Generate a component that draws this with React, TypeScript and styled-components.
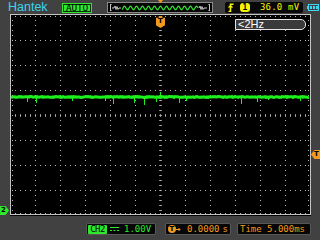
import React, { useMemo } from 'react';
import styled, { createGlobalStyle } from 'styled-components';

const Global = createGlobalStyle`
  html, body { margin: 0; padding: 0; background: #414141; }
  body { width: 320px; height: 240px; overflow: hidden; }
`;

const GREEN = '#2ee82e';
const WAVE = '#1cf01c';
const ORANGE = '#f39a1e';
const YELLOW = '#f4f400';
const CYAN = '#3cd4ee';
const GRID = '#b4b4b4';
const MONO = '"DejaVu Sans Mono", "Liberation Mono", monospace';

const Device = styled.div`
  position: relative;
  width: 320px;
  height: 240px;
  background: #414141;
  display: flex;
  flex-direction: column;
  font-family: ${MONO};
  overflow: hidden;
`;

const TopBar = styled.div`
  position: relative;
  height: 14px;
  display: flex;
  align-items: flex-start;
  padding-left: 8px;
`;

const Brand = styled.div`
  width: 54px;
  font-family: "Liberation Sans", Arial, sans-serif;
  font-size: 12.5px;
  line-height: 14px;
  color: ${CYAN};
`;

const AutoBadge = styled.div`
  width: 30px;
  height: 10px;
  margin-top: 3px;
  margin-right: 15px;
  box-sizing: border-box;
  background: ${GREEN};
  display: flex;
  padding: 1px;
`;

const AutoInner = styled.div`
  flex: 1;
  border: 1px solid #0a300a;
  color: #000;
  font-size: 9.5px;
  line-height: 6px;
  text-align: center;
  letter-spacing: -0.2px;
`;

const Overview = styled.div`
  width: 106px;
  height: 11px;
  margin-top: 2px;
  margin-right: 12px;
  box-sizing: border-box;
  background: #050505;
  border: 1px solid #8a8a8a;
  display: flex;
`;

const TrigInfo = styled.div`
  width: 78px;
  height: 11px;
  margin-top: 2px;
  margin-right: 4px;
  background: #080808;
  border-radius: 2px;
  display: flex;
  align-items: center;
  padding-left: 3px;
  box-sizing: border-box;
  color: ${YELLOW};
  font-size: 9px;
  line-height: 11px;
`;

const SourceBadge = styled.span`
  width: 10px;
  height: 9px;
  margin-left: 6px;
  border-radius: 3px;
  background: ${YELLOW};
  color: #000;
  font-size: 8px;
  line-height: 9px;
  font-weight: bold;
  text-align: center;
`;

const Reading = styled.span<{ $gap: number }>`
  margin-left: ${(p) => p.$gap}px;
  white-space: pre;
  letter-spacing: 0.2px;
`;

const BatteryWrap = styled.div`
  margin-top: 4px;
  display: flex;
`;

const TopTick = styled.div`
  position: absolute;
  left: 158px;
  top: 0;
  width: 5px;
  height: 3px;
  background: ${ORANGE};
  clip-path: polygon(0 0, 100% 0, 50% 100%);
`;

const ScopeRow = styled.div`
  position: relative;
  height: 202px;
  padding-left: 10px;
  display: flex;
`;

const Graticule = styled.div`
  position: relative;
  width: 301px;
  height: 202px;
  background: #000;
`;

const FreqBox = styled.div`
  position: absolute;
  left: 225px;
  top: 5px;
  width: 71px;
  height: 11px;
  box-sizing: border-box;
  border: 1px solid #e4e4e4;
  border-radius: 0 5px 5px 0;
  background: #3a3a3a;
  color: #fff;
  font-family: "Liberation Sans", Arial, sans-serif;
  font-size: 11px;
  line-height: 9px;
  padding-left: 2px;
`;

const Marker = styled.div<{ $color: string; $dir: 'right' | 'left' | 'down' }>`
  position: absolute;
  background: ${(p) => p.$color};
  color: #000;
  font-family: "DejaVu Sans", sans-serif;
  font-weight: bold;
  font-size: 7px;
  text-align: center;
  box-sizing: border-box;
  ${(p) =>
    p.$dir === 'right'
      ? `width: 9px; height: 9px; line-height: 9px; padding-right: 2px;
         clip-path: polygon(0 0, 62% 0, 100% 50%, 62% 100%, 0 100%);`
      : p.$dir === 'left'
      ? `width: 9px; height: 9px; line-height: 9px; padding-left: 2px;
         clip-path: polygon(38% 0, 100% 0, 100% 100%, 38% 100%, 0 50%);`
      : `width: 9px; height: 12px; line-height: 11px;
         clip-path: polygon(30% 0, 70% 0, 70% 15%, 100% 15%, 100% 78%, 50% 100%, 0 78%, 0 15%, 30% 15%);`}
`;

const BottomBar = styled.div`
  height: 24px;
  display: flex;
  align-items: flex-start;
  padding-left: 86px;
  padding-top: 7px;
  box-sizing: border-box;
`;

const InfoBox = styled.div<{ $w: number; $gap: number; $color: string }>`
  width: ${(p) => p.$w}px;
  height: 12px;
  margin-right: ${(p) => p.$gap}px;
  box-sizing: border-box;
  background: #060606;
  border: 1px solid #575757;
  border-radius: 2px;
  display: flex;
  align-items: center;
  padding-left: 1px;
  color: ${(p) => p.$color};
  font-size: 9px;
  line-height: 10px;
  white-space: pre;
`;

const ChBadge = styled.span`
  width: 19px;
  height: 9px;
  background: ${GREEN};
  color: #000;
  font-size: 9px;
  line-height: 9px;
  text-align: center;
  letter-spacing: -0.6px;
  border-radius: 1px;
`;

const Spaced = styled.span<{ $gap: number }>`
  margin-left: ${(p) => p.$gap}px;
  display: inline-flex;
  align-items: center;
`;

const TrigIcon = styled.span`
  width: 8px;
  height: 8px;
  border-radius: 50%;
  background: ${ORANGE};
  color: #000;
  font-family: "DejaVu Sans", sans-serif;
  font-weight: bold;
  font-size: 7px;
  line-height: 8px;
  text-align: center;
  margin-left: 1px;
`;

function useGridPath() {
  return useMemo(() => {
    const d: string[] = [];
    const dot = (x: number, y: number, w = 1, h = 1) => d.push(`M${x} ${y}h${w}v${h}h${-w}z`);
    for (let k = 1; k < 12; k++) {
      const x = k * 25;
      for (let y = 6; y < 201; y += 5) dot(x, y);
    }
    for (let k = 1; k < 8; k++) {
      const y = 1 + k * 25;
      for (let x = 5; x < 300; x += 5) dot(x, y);
    }
    // border ticks
    for (let x = 5; x < 300; x += 5) {
      dot(x, 2, 1, 1);
      dot(x, 199, 1, 1);
    }
    for (let y = 6; y < 201; y += 5) {
      dot(2, y, 1, 1);
      dot(298, y, 1, 1);
    }
    return d.join('');
  }, []);
}

function useCenterTicks() {
  return useMemo(() => {
    const d: string[] = [];
    const dot = (x: number, y: number, w = 1, h = 1) => d.push(`M${x} ${y}h${w}v${h}h${-w}z`);
    for (let y = 6; y < 201; y += 5) {
      dot(149, y);
      dot(151, y);
    }
    for (let x = 5; x < 300; x += 5) {
      dot(x, 100);
      dot(x, 102);
    }
    return d.join('');
  }, []);
}

const SPIKES: [number, number][] = [
  [17, 88], [26, 89], [62, 87], [95, 87], [103, 90], [124, 89], [134, 91],
  [146, 88], [150, 78], [169, 89], [176, 87], [231, 90], [247, 88], [258, 86], [290, 87],
];

function useWave() {
  return useMemo(() => {
    let s = 987654;
    const rnd = () => {
      s = (s * 1103515245 + 12345) & 0x7fffffff;
      return s / 0x7fffffff;
    };
    const pts: string[] = [];
    for (let x = 1; x < 300; x += 1) {
      const y = 83 + (rnd() - 0.5) * 0.9;
      pts.push(`${x},${y.toFixed(2)}`);
    }
    return pts.join(' ');
  }, []);
}

function OverviewWave() {
  const sine = useMemo(() => {
    const p: string[] = [];
    for (let x = 14; x <= 90; x += 0.5) p.push(`${x},${(5 + 1.8 * Math.sin((x / 6) * Math.PI * 2)).toFixed(2)}`);
    return p.join(' ');
  }, []);
  return (
    <svg width="104" height="9" viewBox="0 0 104 9">
      <path d="M2 1.5h1.5M2.5 1.5v6M2 7.5h1.5" stroke="#c8c8c8" strokeWidth="1" fill="none" />
      <polyline points="4,5 6,5 7,3 8,6.5 9,3.5 10,6.5 11,5 13,5" stroke="#c8c8c8" fill="none" strokeWidth="1" />
      <polyline points={sine} stroke={GREEN} fill="none" strokeWidth="1.2" />
      <polyline points="91,5 92,3 93,6.5 94,3.5 95,6.5 96,5 99,5" stroke="#c8c8c8" fill="none" strokeWidth="1" />
      <path d="M100.5 1.5h1.5M101.5 1.5v6M100.5 7.5h1.5" stroke="#c8c8c8" strokeWidth="1" fill="none" />
    </svg>
  );
}

function EdgeIcon() {
  return (
    <svg width="6" height="9" viewBox="0 0 6 9">
      <path d="M0.5 8.5H2.5V1.2H5.5" stroke={YELLOW} strokeWidth="1.6" fill="none" />
      <path d="M0.5 4.5L2.5 2.8L4.5 4.5" stroke={YELLOW} strokeWidth="1.4" fill="none" />
    </svg>
  );
}

function Battery() {
  return (
    <svg width="12" height="7" viewBox="0 0 12 7">
      <rect x="0" y="2" width="1.5" height="3" fill={CYAN} />
      <rect x="1.5" y="0.5" width="10" height="6" fill="none" stroke={CYAN} />
      <rect x="3" y="2" width="2" height="3" fill={CYAN} />
      <rect x="6" y="2" width="2" height="3" fill={CYAN} />
      <rect x="9" y="2" width="2" height="3" fill={CYAN} />
    </svg>
  );
}

function DcSymbol() {
  return (
    <svg width="9" height="5" viewBox="0 0 9 5">
      <rect x="0" y="0" width="9" height="1" fill={GREEN} />
      <rect x="0" y="3" width="2" height="1" fill={GREEN} />
      <rect x="3.5" y="3" width="2" height="1" fill={GREEN} />
      <rect x="7" y="3" width="2" height="1" fill={GREEN} />
    </svg>
  );
}

function Arrow() {
  return (
    <svg width="5" height="5" viewBox="0 0 5 5">
      <path d="M0 2.5H4M2.5 1L4 2.5L2.5 4" stroke={ORANGE} strokeWidth="1" fill="none" />
    </svg>
  );
}

export default function App() {
  const grid = useGridPath();
  const ticks = useCenterTicks();
  const wave = useWave();
  return (
    <>
      <Global />
      <Device>
        <TopBar>
          <Brand>Hantek</Brand>
          <AutoBadge>
            <AutoInner>AUTO</AutoInner>
          </AutoBadge>
          <Overview>
            <OverviewWave />
          </Overview>
          <TrigInfo>
            <EdgeIcon />
            <SourceBadge>1</SourceBadge>
            <Reading $gap={10}>36.0 mV</Reading>
          </TrigInfo>
          <BatteryWrap>
            <Battery />
          </BatteryWrap>
          <TopTick />
        </TopBar>
        <ScopeRow>
          <Graticule>
            <svg width="301" height="202" viewBox="0 0 301 202" shapeRendering="crispEdges">
              <rect x="0.5" y="0.5" width="300" height="200" fill="none" stroke="#c4c4c4" />
              <path d={grid} fill={GRID} />
              <path d={ticks} fill="#8a8a8a" />
              <polyline points={wave} fill="none" stroke={WAVE} strokeWidth="3" shapeRendering="auto" />
              {SPIKES.map(([x, y]) => (
                <rect key={x} x={x} y={Math.min(y, 83)} width="1" height={Math.abs(y - 83)} fill={WAVE} />
              ))}
            </svg>
            <FreqBox>&lt;2Hz</FreqBox>
            <Marker $color={ORANGE} $dir="down" style={{ left: 146, top: 2 }}>T</Marker>
          </Graticule>
          <Marker $color={GREEN} $dir="right" style={{ left: 0, top: 192 }}>2</Marker>
          <Marker $color={ORANGE} $dir="left" style={{ left: 311, top: 136 }}>T</Marker>
        </ScopeRow>
        <BottomBar>
          <InfoBox $w={70} $gap={9} $color={GREEN}>
            <ChBadge>CH2</ChBadge>
            <Spaced $gap={3}><DcSymbol /></Spaced>
            <Spaced $gap={5}>1.00V</Spaced>
          </InfoBox>
          <InfoBox $w={66} $gap={6} $color={ORANGE}>
            <TrigIcon>T</TrigIcon>
            <Arrow />
            <Spaced $gap={6}>0.0000</Spaced>
            <Spaced $gap={3}>s</Spaced>
          </InfoBox>
          <InfoBox $w={74} $gap={0} $color={ORANGE}>
            <Spaced $gap={1}>Time 5.000ms</Spaced>
          </InfoBox>
        </BottomBar>
      </Device>
    </>
  );
}
